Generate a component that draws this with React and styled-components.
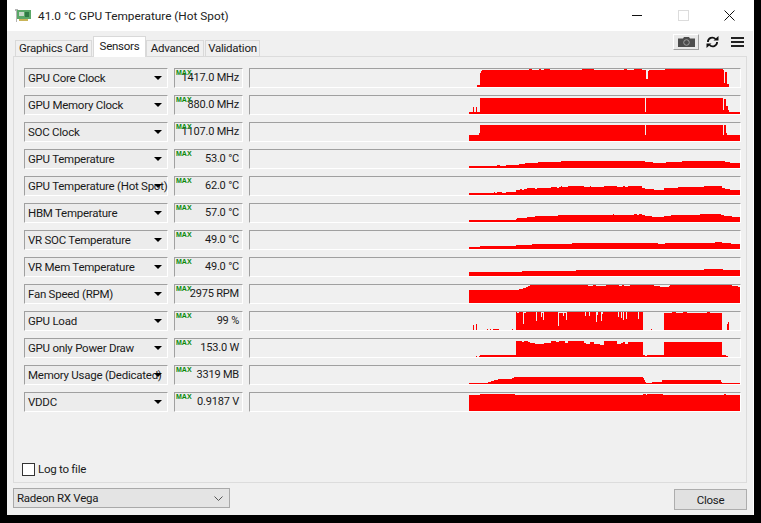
import React from 'react';
import styled, { createGlobalStyle } from 'styled-components';

const UI_FONT = 'Roboto, "Liberation Sans", sans-serif';

const GlobalStyle = createGlobalStyle`
  html, body {
    margin: 0;
    height: 100%;
    background: #000;
    overflow: hidden;
  }
`;

const Window = styled.div`
  margin-left: 7px;
  width: 747px;
  height: 515px;
  box-sizing: border-box;
  border-right: 1px solid #fff;
  display: flex;
  flex-direction: column;
  background: #f0f0f0;
  font-family: ${UI_FONT};
  font-size: 11.5px;
  letter-spacing: -0.25px;
  color: #1a1a1a;
`;

const TitleBar = styled.div`
  height: 31px;
  flex: none;
  display: flex;
  align-items: center;
  background: #fff;
  padding-left: 8px;
`;

const TitleText = styled.span`
  margin-left: 7px;
  font-size: 11.8px;
  letter-spacing: 0;
  color: #222;
  white-space: nowrap;
`;

const WinButtons = styled.div`
  margin-left: auto;
  display: flex;
  align-items: center;
  padding-right: 18px;
  gap: 35px;
`;

const TopRow = styled.div`
  height: 25px;
  flex: none;
  display: flex;
  align-items: flex-end;
  padding: 0 9px 0 8px;
`;

const Tabs = styled.div`
  display: flex;
  align-items: flex-end;
  position: relative;
  top: 1px;
  z-index: 1;
`;

const Tab = styled.div`
  height: ${(p) => (p.$active ? 21 : 17)}px;
  width: ${(p) => p.$w}px;
  margin-right: ${(p) => (p.$active ? 0 : 1)}px;
  box-sizing: border-box;
  display: flex;
  align-items: center;
  justify-content: center;
  background: ${(p) => (p.$active ? '#fff' : '#f0f0f0')};
  border: 1px solid #d9d9d9;
  border-bottom: ${(p) => (p.$active ? 'none' : '1px solid #d9d9d9')};
  white-space: nowrap;
  padding-bottom: ${(p) => (p.$active ? 2 : 1)}px;
`;

const Tools = styled.div`
  margin-left: auto;
  display: flex;
  align-items: center;
  align-self: flex-start;
  margin-top: 3px;
`;

const CameraButton = styled.div`
  width: 26px;
  height: 16px;
  box-sizing: border-box;
  display: flex;
  align-items: center;
  justify-content: center;
  background: #e9e9e9;
  border: 1px solid;
  border-color: #fff #a0a0a0 #a0a0a0 #fff;
  margin-right: 7px;
`;

const Hamburger = styled.div`
  width: 13px;
  margin-left: 12px;
  display: flex;
  flex-direction: column;
  gap: 2px;
`;

const HamburgerBar = styled.span`
  display: block;
  height: 2px;
  background: #222;
`;

const Panel = styled.div`
  flex: none;
  height: 427px;
  margin: 0 6px 0 6px;
  box-sizing: border-box;
  border: 1px solid #dcdcdc;
  padding: 11px 5px 0 10px;
  display: flex;
  flex-direction: column;
`;

const Rows = styled.div`
  display: flex;
  flex-direction: column;
  gap: 7px;
`;

const Row = styled.div`
  display: flex;
  height: 20px;
  gap: 6px;
`;

const sunken = `
  box-sizing: border-box;
  height: 20px;
  border: 1px solid;
  border-color: #a0a0a0 #fff #fff #a0a0a0;
`;

const SensorSelect = styled.div`
  ${sunken}
  position: relative;
  width: 144px;
  flex: none;
  display: flex;
  align-items: center;
  padding: 0 0 1px 3px;
  white-space: nowrap;
  background: #ececec;
`;

const Arrow = styled.span`
  position: absolute;
  left: 129px;
  top: 7px;
  width: 0;
  height: 0;
  border-left: 4px solid transparent;
  border-right: 4px solid transparent;
  border-top: 4px solid #000;
`;

const ValueBox = styled.div`
  ${sunken}
  position: relative;
  width: 69px;
  flex: none;
  display: flex;
  align-items: center;
  justify-content: flex-end;
  padding: 0 3px 1px 0;
  font-size: 11px;
  letter-spacing: -0.2px;
  white-space: nowrap;
  background: #ececec;
`;

const MaxBadge = styled.span`
  position: absolute;
  left: 1px;
  top: 0;
  font-family: "Liberation Sans", sans-serif;
  font-size: 7px;
  line-height: 8px;
  font-weight: bold;
  letter-spacing: 0;
  color: #0a8a0a;
`;

const GraphBox = styled.div`
  ${sunken}
  width: 492px;
  flex: none;
  display: flex;
  justify-content: flex-end;
  align-items: flex-end;
  background: #f0f0f0;
`;

const LogRow = styled.label`
  margin: auto 0 6px -2px;
  display: flex;
  align-items: center;
  gap: 3px;
`;

const CheckBox = styled.span`
  width: 13px;
  height: 13px;
  box-sizing: border-box;
  background: #fff;
  border: 1px solid #333;
`;

const Footer = styled.div`
  flex: 1;
  display: flex;
  align-items: flex-start;
  justify-content: space-between;
  padding: 5px 6px 0 6px;
`;

const CardSelect = styled.div`
  width: 217px;
  height: 20px;
  box-sizing: border-box;
  display: flex;
  align-items: center;
  justify-content: space-between;
  padding: 0 6px 0 3px;
  background: #e4e4e4;
  border: 1px solid #a9a9a9;
`;

const CloseButton = styled.div`
  width: 73px;
  height: 21px;
  margin-top: 1px;
  box-sizing: border-box;
  display: flex;
  align-items: center;
  justify-content: center;
  background: #e1e1e1;
  border: 1px solid #adadad;
`;

// each trace is a list of [first pixel, height] runs, a run lasts until the next one
const sensors = [
  { name: 'GPU Core Clock', value: '1417.0 MHz', runs: [[8, 2], [11, 14], [12, 16], [13, 17], [60, 18], [63, 17], [70, 18], [72, 17], [75, 18], [81, 17], [113, 18], [125, 17], [155, 18], [158, 17], [165, 18], [173, 17], [177, 8], [179, 16], [180, 17], [196, 18], [254, 17], [255, 4], [256, 15], [258, 3], [260, 0]] },
  { name: 'GPU Memory Clock', value: '880.0 MHz', runs: [[0, 2], [4, 7], [5, 2], [7, 7], [8, 2], [11, 16], [176, 2], [177, 16], [254, 4], [255, 15], [257, 8], [259, 4], [260, 2]] },
  { name: 'SOC Clock', value: '1107.0 MHz', runs: [[0, 6], [10, 8], [11, 16], [176, 6], [177, 16], [254, 6], [255, 16], [257, 8], [258, 6]] },
  { name: 'GPU Temperature', value: '53.0 °C', runs: [[0, 2], [28, 3], [31, 2], [37, 3], [50, 4], [56, 5], [69, 6], [92, 7], [176, 6], [184, 5], [197, 6], [213, 7], [256, 6], [261, 5]] },
  { name: 'GPU Temperature (Hot Spot)', value: '62.0 °C', runs: [[0, 2], [25, 3], [26, 2], [28, 3], [33, 2], [37, 3], [47, 5], [51, 6], [53, 5], [55, 6], [58, 7], [66, 6], [68, 7], [82, 8], [88, 7], [90, 8], [92, 9], [93, 8], [99, 9], [115, 8], [121, 9], [122, 8], [135, 9], [148, 8], [154, 9], [156, 8], [159, 9], [173, 7], [176, 6], [185, 5], [195, 7], [209, 8], [235, 9], [253, 7], [256, 6], [261, 5]] },
  { name: 'HBM Temperature', value: '57.0 °C', runs: [[0, 2], [47, 3], [48, 4], [58, 5], [66, 6], [89, 7], [144, 8], [145, 7], [165, 8], [168, 7], [170, 8], [173, 7], [176, 6], [183, 5], [195, 6], [202, 7], [231, 8], [252, 7], [255, 6], [263, 5]] },
  { name: 'VR SOC Temperature', value: '49.0 °C', runs: [[0, 2], [11, 3], [47, 4], [63, 5], [103, 6], [189, 5], [196, 6], [246, 7], [253, 6], [262, 5]] },
  { name: 'VR Mem Temperature', value: '49.0 °C', runs: [[0, 4], [53, 5], [107, 6], [235, 7], [254, 6]] },
  { name: 'Fan Speed (RPM)', value: '2975 RPM', runs: [[0, 13], [50, 14], [54, 15], [57, 16], [59, 17], [61, 18], [119, 17], [124, 18], [127, 17], [137, 18], [150, 17], [153, 18], [155, 17], [161, 18], [185, 17], [191, 16], [200, 17], [201, 18], [263, 17], [269, 16]] },
  { name: 'GPU Load', value: '99 %', runs: [[0, 0], [4, 5], [5, 0], [7, 6], [8, 0], [18, 1], [19, 0], [21, 1], [22, 0], [24, 1], [30, 0], [43, 1], [44, 0], [47, 18], [48, 17], [50, 18], [54, 6], [55, 17], [57, 18], [67, 9], [68, 18], [72, 13], [73, 17], [74, 10], [75, 18], [89, 4], [90, 17], [94, 14], [95, 17], [97, 10], [98, 18], [116, 14], [117, 18], [120, 14], [121, 18], [127, 8], [128, 15], [129, 18], [132, 9], [133, 16], [134, 18], [149, 13], [150, 18], [152, 12], [153, 18], [154, 10], [155, 18], [157, 11], [158, 18], [169, 11], [170, 18], [174, 0], [182, 1], [183, 0], [195, 17], [203, 18], [207, 17], [214, 18], [218, 17], [238, 18], [241, 17], [253, 0], [258, 6], [259, 8], [260, 0]] },
  { name: 'GPU only Power Draw', value: '153.0 W', runs: [[0, 0], [7, 1], [8, 0], [10, 1], [11, 2], [47, 16], [53, 15], [55, 16], [59, 15], [61, 14], [66, 13], [75, 14], [82, 16], [87, 15], [90, 16], [96, 14], [99, 16], [115, 14], [117, 13], [121, 15], [125, 13], [131, 12], [135, 16], [148, 13], [152, 14], [154, 15], [156, 13], [159, 15], [174, 2], [176, 1], [178, 2], [195, 15], [253, 2], [257, 1], [259, 0]] },
  { name: 'Memory Usage (Dedicated)', value: '3319 MB', runs: [[0, 1], [19, 2], [22, 3], [25, 4], [29, 5], [43, 6], [45, 7], [174, 6], [175, 4], [176, 2], [177, 1], [183, 2], [193, 4], [252, 2], [253, 1]] },
  { name: 'VDDC', value: '0.9187 V', runs: [[0, 16], [11, 17], [46, 16], [174, 17], [177, 16], [178, 17], [194, 16], [255, 17], [257, 16]] },
];

const GRAPH_W = 271;
const GRAPH_H = 18;

const tracePath = (runs) =>
  runs
    .map(([start, h], i) => {
      const end = i + 1 < runs.length ? runs[i + 1][0] : GRAPH_W;
      return h ? `M${start} ${GRAPH_H}V${GRAPH_H - h}H${end}V${GRAPH_H}Z` : '';
    })
    .join('');

const Trace = ({ runs }) => (
  <svg width={GRAPH_W} height={GRAPH_H} viewBox={`0 0 ${GRAPH_W} ${GRAPH_H}`} shapeRendering="crispEdges">
    <path d={tracePath(runs)} fill="#ff0000" />
  </svg>
);

const CardIcon = () => (
  <svg width="16" height="13" viewBox="0 0 16 13" shapeRendering="crispEdges">
    <rect x="0" y="0" width="3" height="2" fill="#b4b4b4" />
    <rect x="1" y="2" width="1" height="11" fill="#b4b4b4" />
    <rect x="2" y="1" width="14" height="9" fill="#5aa868" />
    <rect x="4" y="3" width="5" height="4" fill="#c6d8c8" />
    <rect x="10" y="3" width="4" height="5" fill="#2f7a44" />
    <rect x="4" y="10" width="9" height="2" fill="#c9b458" />
  </svg>
);

const MinimizeIcon = () => (
  <svg width="11" height="11" viewBox="0 0 11 11" shapeRendering="crispEdges">
    <rect x="0" y="5" width="10" height="1" fill="#111" />
  </svg>
);

const MaximizeIcon = () => (
  <svg width="11" height="11" viewBox="0 0 11 11" shapeRendering="crispEdges">
    <rect x="0.5" y="0.5" width="9.5" height="9.5" fill="none" stroke="#dcdcdc" />
  </svg>
);

const CloseIcon = () => (
  <svg width="11" height="11" viewBox="0 0 11 11">
    <path d="M0.5 0.5L10.5 10.5M10.5 0.5L0.5 10.5" stroke="#111" strokeWidth="1" fill="none" />
  </svg>
);

const CameraIcon = () => (
  <svg width="17" height="10" viewBox="0 0 17 10">
    <path d="M0 1.5H5L6 0H11L12 1.5H17V10H0Z" fill="#4c4c4c" />
    <circle cx="8.5" cy="5.5" r="2.8" fill="#4c4c4c" stroke="#a0a0a0" strokeWidth="1" />
  </svg>
);

const RefreshIcon = () => (
  <svg width="13" height="12" viewBox="0 0 12 12">
    <path d="M1.4 6A4.4 4.4 0 0 1 9 3" stroke="#111" strokeWidth="1.8" fill="none" />
    <path d="M10.6 6A4.4 4.4 0 0 1 3 9" stroke="#111" strokeWidth="1.8" fill="none" />
    <path d="M7 4.6H12V0Z" fill="#111" />
    <path d="M5 7.4H0V12Z" fill="#111" />
  </svg>
);

const ChevronIcon = () => (
  <svg width="9" height="5" viewBox="0 0 9 5">
    <path d="M0.5 0.5L4.5 4.5L8.5 0.5" stroke="#555" strokeWidth="1" fill="none" />
  </svg>
);

export default function App() {
  return (
    <>
      <GlobalStyle />
      <Window>
        <TitleBar>
          <CardIcon />
          <TitleText>41.0 °C GPU Temperature (Hot Spot)</TitleText>
          <WinButtons>
            <MinimizeIcon />
            <MaximizeIcon />
            <CloseIcon />
          </WinButtons>
        </TitleBar>
        <TopRow>
          <Tabs>
            <Tab $w={77}>Graphics Card</Tab>
            <Tab $w={53} $active>Sensors</Tab>
            <Tab $w={58}>Advanced</Tab>
            <Tab $w={55}>Validation</Tab>
          </Tabs>
          <Tools>
            <CameraButton><CameraIcon /></CameraButton>
            <RefreshIcon />
            <Hamburger>
              <HamburgerBar />
              <HamburgerBar />
              <HamburgerBar />
            </Hamburger>
          </Tools>
        </TopRow>
        <Panel>
          <Rows>
            {sensors.map((s) => (
              <Row key={s.name}>
                <SensorSelect>
                  {s.name}
                  <Arrow />
                </SensorSelect>
                <ValueBox>
                  <MaxBadge>MAX</MaxBadge>
                  {s.value}
                </ValueBox>
                <GraphBox>
                  <Trace runs={s.runs} />
                </GraphBox>
              </Row>
            ))}
          </Rows>
          <LogRow>
            <CheckBox />
            Log to file
          </LogRow>
        </Panel>
        <Footer>
          <CardSelect>
            Radeon RX Vega
            <ChevronIcon />
          </CardSelect>
          <CloseButton>Close</CloseButton>
        </Footer>
      </Window>
    </>
  );
}
